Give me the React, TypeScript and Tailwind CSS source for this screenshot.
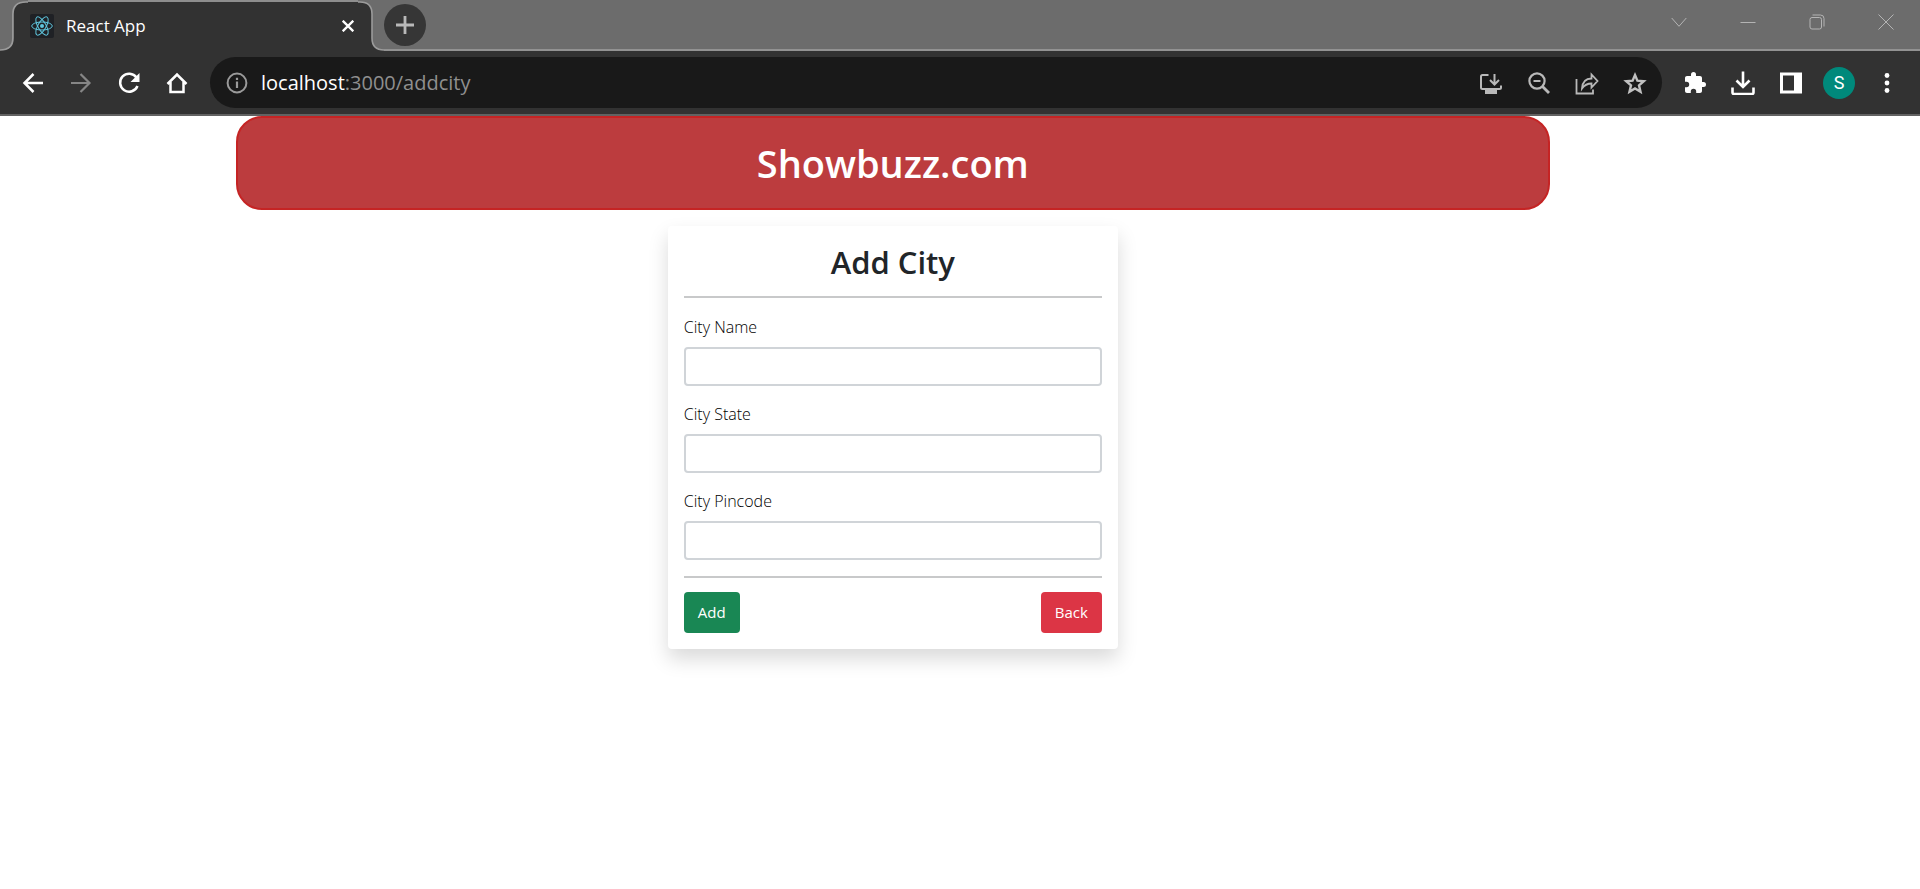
import React from 'react';

function TabEdge({ flip = false }: { flip?: boolean }) {
  return (
    <svg viewBox="0 0 26 51" className={flip ? 'h-[51px] w-[26px] shrink-0 -scale-x-100' : 'h-[51px] w-[28px] shrink-0'} preserveAspectRatio="none" aria-hidden="true">
      <path d="M0 50 Q12 50 12 38 V14 Q12 2 24 2 H26 V51 H0Z" fill="#323232" />
      <path d="M0 50 Q12 50 12 38 V14 Q12 2 24 2 H26" fill="none" stroke="#9b9b9b" strokeWidth="1.6" />
    </svg>
  );
}

function Glyph({ children, size = 24 }: { children: React.ReactNode; size?: number }) {
  return (
    <svg viewBox="0 0 24 24" width={size} height={size} fill="none" stroke="currentColor" strokeWidth="2.2" aria-hidden="true">
      {children}
    </svg>
  );
}

function ToolButton({ label, className = 'text-white', children }: { label: string; className?: string; children: React.ReactNode }) {
  return (
    <button type="button" aria-label={label} className={`flex h-12 w-12 shrink-0 items-center justify-center ${className}`}>
      {children}
    </button>
  );
}

function WindowButton({ label, children }: { label: string; children: React.ReactNode }) {
  return (
    <button type="button" aria-label={label} className="flex h-[43px] w-[69px] items-center justify-center text-[#b4b4b4]">
      <svg viewBox="0 0 16 16" width="16" height="16" fill="none" stroke="currentColor" aria-hidden="true">
        {children}
      </svg>
    </button>
  );
}

function TabStrip() {
  return (
    <div className="flex h-[51px] bg-[#6c6c6c]">
      <TabEdge />
      <div className="flex w-[330px] items-center border-t-2 border-[#8e8e8e] bg-[#323232] pb-0.5 pl-0.5 text-white">
        <svg viewBox="0 0 24 24" className="h-6 w-6 rounded-xs bg-[#1f2125]" fill="none" stroke="#5fc6de" strokeWidth="1" aria-hidden="true">
          <ellipse cx="12" cy="12" rx="10.3" ry="4" />
          <ellipse cx="12" cy="12" rx="10.3" ry="4" transform="rotate(60 12 12)" />
          <ellipse cx="12" cy="12" rx="10.3" ry="4" transform="rotate(120 12 12)" />
          <circle cx="12" cy="12" r="2" fill="#5fc6de" stroke="none" />
        </svg>
        <span className="ml-3 text-[17px]">React App</span>
        <button type="button" aria-label="Close tab" className="ml-auto flex h-5 w-5 items-center justify-center">
          <svg viewBox="0 0 12 12" width="12" height="12" fill="none" stroke="currentColor" strokeWidth="2.3" aria-hidden="true">
            <path d="M.7.7 11.3 11.3M11.3.7.7 11.3" />
          </svg>
        </button>
      </div>
      <TabEdge flip />
      <div className="flex flex-1 justify-between border-b-2 border-[#929292]">
        <button type="button" aria-label="New tab" className="mt-1 flex h-[42px] w-[42px] items-center justify-center rounded-full bg-[#363636] text-[#b9b9b9]">
          <svg viewBox="0 0 18 18" width="18" height="18" stroke="currentColor" strokeWidth="2.8" aria-hidden="true">
            <path d="M9 0V18M0 9H18" />
          </svg>
        </button>
        <div className="flex">
          <WindowButton label="Search tabs"><path d="M.7 4 8 12.3 15.3 4" /></WindowButton>
          <WindowButton label="Minimize"><path d="M.5 8.5H15.5" /></WindowButton>
          <WindowButton label="Restore">
            <rect x="1" y="3.5" width="11.5" height="11.5" rx="2" />
            <path d="M3.5 1H11.5Q15 1 15 4.5V12.5" />
          </WindowButton>
          <WindowButton label="Close"><path d="M.5.5 15.5 15.5M15.5.5.5 15.5" /></WindowButton>
        </div>
      </div>
    </div>
  );
}

function Toolbar() {
  return (
    <div className="flex items-center border-b-2 border-[#626262] bg-[#323232] px-[9px] py-1.5">
      <ToolButton label="Back"><Glyph><path d="M22 12H3.5M12.5 3 3.5 12l9 9" strokeWidth="2.5" /></Glyph></ToolButton>
      <ToolButton label="Forward" className="text-[#868686]"><Glyph><path d="M2 12H20.5M11.5 3 20.5 12l-9 9" /></Glyph></ToolButton>
      <ToolButton label="Reload">
        <Glyph><path d="M19.5 6.5A9 9 0 1 0 20.5 15" strokeWidth="2.5" /><path d="M22.5 2V11H13.5Z" fill="currentColor" stroke="none" /></Glyph>
      </ToolButton>
      <ToolButton label="Home"><Glyph><path d="M5.5 11V21H18.5V11M2.5 13 12 3.5 21.5 13" strokeWidth="2.5" /></Glyph></ToolButton>
      <div className="mx-[9px] flex h-[51px] flex-1 items-center rounded-full bg-[#191919] px-[3px]">
        <ToolButton label="Site information" className="text-[#9a9a9a]">
          <Glyph><circle cx="12" cy="12" r="9.4" strokeWidth="2" /><path d="M12 10.5V17M12 6.8V9" strokeWidth="2.2" /></Glyph>
        </ToolButton>
        <span className="flex-1 text-[20px] text-[#8f8f8f]"><span className="text-white">localhost</span>:3000/addcity</span>
        <ToolButton label="Install app" className="text-[#b9b9b9]">
          <Glyph><path d="M9.5 4H3.5Q2 4 2 5.5V16.5Q2 18 3.5 18H20.5Q22 18 22 16.5V14.5M15.5 3V13M11 9l4.5 4.5L20 9" strokeWidth="2" /><path d="M6 18H18V23H6Z" fill="currentColor" stroke="none" /></Glyph>
        </ToolButton>
        <ToolButton label="Zoom" className="text-[#b9b9b9]">
          <Glyph><circle cx="10" cy="10" r="7.6" strokeWidth="2.2" /><path d="M6.5 10H13.5" strokeWidth="2" /><path d="M15 15l7 7" strokeWidth="2.8" /></Glyph>
        </ToolButton>
        <ToolButton label="Share" className="text-[#b9b9b9]">
          <Glyph><path d="M1.5 8V22.5H18V18.5M7 17.5C7.5 11 11 7.5 16.5 7.5V3.5L22.5 10 16.5 16.5V12.5C12 12.5 9.5 14 7 17.5Z" strokeWidth="1.8" /></Glyph>
        </ToolButton>
        <ToolButton label="Bookmark" className="text-[#c0c0c0]">
          <Glyph><path d="M12 4 14.4 9.7 20.8 10.2 16 14.4 17.5 20.7 12 17.4 6.5 20.7 8 14.4 3.2 10.2 9.6 9.7Z" strokeWidth="2.4" /></Glyph>
        </ToolButton>
      </div>
      <ToolButton label="Extensions">
        <svg viewBox="0 0 24 24" width="24" height="24" fill="currentColor" aria-hidden="true">
          <path d="M20.5 11H19V7c0-1.1-.9-2-2-2h-4V3.5a2.5 2.5 0 0 0-5 0V5H4c-1.1 0-2 .9-2 2v3.8h1.5a2.7 2.7 0 0 1 0 5.4H2V20c0 1.1.9 2 2 2h3.8v-1.5a2.7 2.7 0 0 1 5.4 0V22H17c1.1 0 2-.9 2-2v-4h1.5a2.5 2.5 0 0 0 0-5Z" />
        </svg>
      </ToolButton>
      <ToolButton label="Downloads">
        <Glyph><path d="M12 .5V16M5.5 9.5 12 16 18.5 9.5M1.5 16.5V21.5Q1.5 23 3 23H21Q22.5 23 22.5 21.5V16.5" strokeWidth="2.6" /></Glyph>
      </ToolButton>
      <ToolButton label="Side panel">
        <Glyph><path d="M1 1.5H23V22.5H1ZM4 4.5V19.5H15V4.5Z" fill="currentColor" fillRule="evenodd" stroke="none" /></Glyph>
      </ToolButton>
      <ToolButton label="Profile">
        <span className="flex h-8 w-8 items-center justify-center rounded-full bg-[#00897b] font-[Roboto] text-[18px]">S</span>
      </ToolButton>
      <ToolButton label="Menu">
        <Glyph><g fill="currentColor" stroke="none"><circle cx="12" cy="4.5" r="2.4" /><circle cx="12" cy="12" r="2.4" /><circle cx="12" cy="19.5" r="2.4" /></g></Glyph>
      </ToolButton>
    </div>
  );
}

const fields = [
  { id: 'cityName', label: 'City Name' },
  { id: 'cityState', label: 'City State' },
  { id: 'cityPincode', label: 'City Pincode' },
];

function AddCity() {
  return (
    <form className="w-full max-w-[450px] rounded-sm bg-white p-4 shadow-[0_10px_20px_rgba(0,0,0,0.15)]" onSubmit={(e) => e.preventDefault()}>
      <h2 className="pb-3.5 text-center text-[31px] leading-10 font-semibold">Add City</h2>
      <div className="flex flex-col gap-4 border-y-2 border-[#c8c9ca] pt-[17px] pb-4">
        {fields.map((f) => (
          <div key={f.id} className="flex flex-col gap-2">
            <label htmlFor={f.id} className="text-[16px] leading-6 font-light text-black">{f.label}</label>
            <input id={f.id} type="text" className="h-[39px] w-full rounded-sm border-2 border-[#d0d4d8] px-3 outline-none" />
          </div>
        ))}
      </div>
      <div className="flex justify-between pt-3.5 text-[15px] text-white">
        <button type="submit" className="h-[41px] rounded-sm bg-[#198754] px-3.5">Add</button>
        <button type="button" className="h-[41px] rounded-sm bg-[#dc3545] px-3.5">Back</button>
      </div>
    </form>
  );
}

export default function App() {
  return (
    <div className="min-h-screen bg-white font-['Open_Sans','Noto_Sans',sans-serif] text-[#212529]">
      <header>
        <TabStrip />
        <Toolbar />
      </header>
      <main className="flex flex-col items-center gap-4 pr-[7%]">
        <div className="w-full max-w-[1314px] rounded-[26px] border-2 border-[#c52424] bg-[#bc3c3e] py-5 text-center text-white">
          <h1 className="text-[38px] leading-[50px] font-semibold">Showbuzz.com</h1>
        </div>
        <AddCity />
      </main>
    </div>
  );
}
